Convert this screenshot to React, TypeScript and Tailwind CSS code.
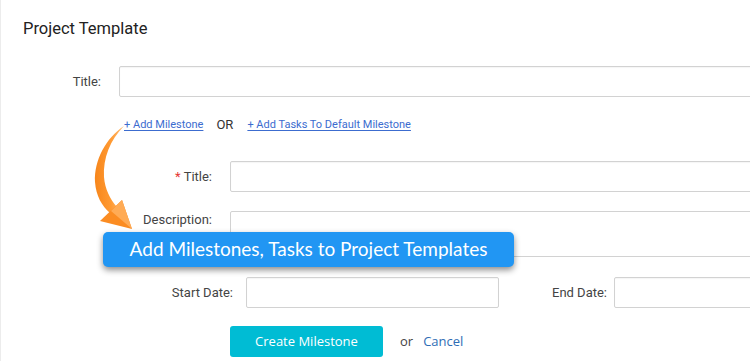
import React from "react";

const inputCls = "shrink-0 h-[31px] border border-[#d2d2d2] rounded-[2px] bg-white shadow-[inset_0_1px_1px_rgba(0,0,0,0.04)]";
const labelCls = "shrink-0 whitespace-nowrap text-[13px] text-[#444]";

export default function App() {
  return (
    <div
      className="relative w-[750px] h-[361px] overflow-hidden bg-white text-[#333]"
      style={{ fontFamily: "Roboto, 'Liberation Sans', sans-serif" }}
    >
      <div className="absolute left-0 top-0 bottom-0 w-px bg-[#ececec]" />
      <h2 className="pl-[23px] pt-[19px] text-[16.5px] leading-[20px] text-[#222] font-normal">
        Project Template
      </h2>

      {/* Title row */}
      <div className="mt-[27px] flex items-center w-[900px]">
        <label className={`w-[101px] text-right ${labelCls}`}>Title:</label>
        <div className={`ml-[18px] w-[700px] ${inputCls}`} />
      </div>

      {/* Links row */}
      <div className="mt-[20px] pl-[124px] flex items-center leading-[16px] whitespace-nowrap">
        <a className="text-[11px] text-[#3c6ccf] underline underline-offset-2">+ Add Milestone</a>
        <span className="ml-[13px] text-[13px] text-[#333]">OR</span>
        <a className="ml-[14px] text-[11px] text-[#3c6ccf] underline underline-offset-2">
          + Add Tasks To Default Milestone
        </a>
      </div>

      {/* Milestone title */}
      <div className="mt-[28px] flex items-center w-[900px]">
        <label className={`w-[212px] text-right ${labelCls}`}>
          <span className="text-[#e53935] mr-[3px]">*</span>Title:
        </label>
        <div className={`ml-[18px] w-[600px] ${inputCls}`} />
      </div>

      {/* Description */}
      <div className="mt-[19px] flex items-start w-[900px]">
        <label className={`w-[212px] pt-[1px] text-right leading-[16px] ${labelCls}`}>Description:</label>
        <div className="shrink-0 ml-[18px] w-[600px] h-[46px] border border-[#d2d2d2] rounded-[2px] bg-white" />
      </div>

      {/* Dates */}
      <div className="mt-[20px] flex items-center w-[1000px]">
        <label className={`w-[233px] text-right ${labelCls}`}>Start Date:</label>
        <div className={`ml-[13px] w-[253px] ${inputCls}`} />
        <label className={`ml-[53px] ${labelCls}`}>End Date:</label>
        <div className={`ml-[7px] w-[300px] ${inputCls}`} />
      </div>

      {/* Buttons */}
      <div className="mt-[18px] flex items-center whitespace-nowrap">
        <button
          className="shrink-0 ml-[230px] w-[153px] h-[31px] rounded-[3px] bg-[#00bcd4] text-white text-[13px]"
          style={{ fontFamily: "'Open Sans', sans-serif" }}
        >
          Create Milestone
        </button>
        <span className="ml-[17px] text-[13px] text-[#444]" style={{ fontFamily: "'Open Sans', sans-serif" }}>or</span>
        <a className="ml-[10px] text-[13px] text-[#2f6db5]" style={{ fontFamily: "'Open Sans', sans-serif" }}>Cancel</a>
      </div>

      {/* Arrow overlay */}
      <svg className="absolute left-0 top-0 pointer-events-none" width="200" height="260" viewBox="0 0 200 260">
        <defs>
          <linearGradient id="og" x1="0" y1="0" x2="1" y2="0">
            <stop offset="0" stopColor="#f7861b" />
            <stop offset="0.55" stopColor="#ff9a33" />
            <stop offset="1" stopColor="#ffc07a" />
          </linearGradient>
        </defs>
        <path
          d="M124,126 C106,138 94,160 95,182 C96,196 102,206 110,213 L117,207 C110,199 105,189 104,177 C103,158 110,140 124,126 Z"
          fill="url(#og)"
        />
        <path d="M100,221 L122,200 L132,229 Z" fill="#fb8c22" />
        <path d="M111,211 L122,200 L132,229 Z" fill="#ffab55" />
      </svg>

      {/* Banner */}
      <div
        className="absolute left-[103px] top-[232px] w-[411px] h-[35px] rounded-[5px] bg-[#2196f3] shadow-[0_3px_6px_rgba(0,0,0,0.45)] flex items-center justify-center text-white text-[19px] whitespace-nowrap"
        style={{ fontFamily: "Lato, sans-serif" }}
      >
        Add Milestones, Tasks to Project Templates
      </div>
    </div>
  );
}
